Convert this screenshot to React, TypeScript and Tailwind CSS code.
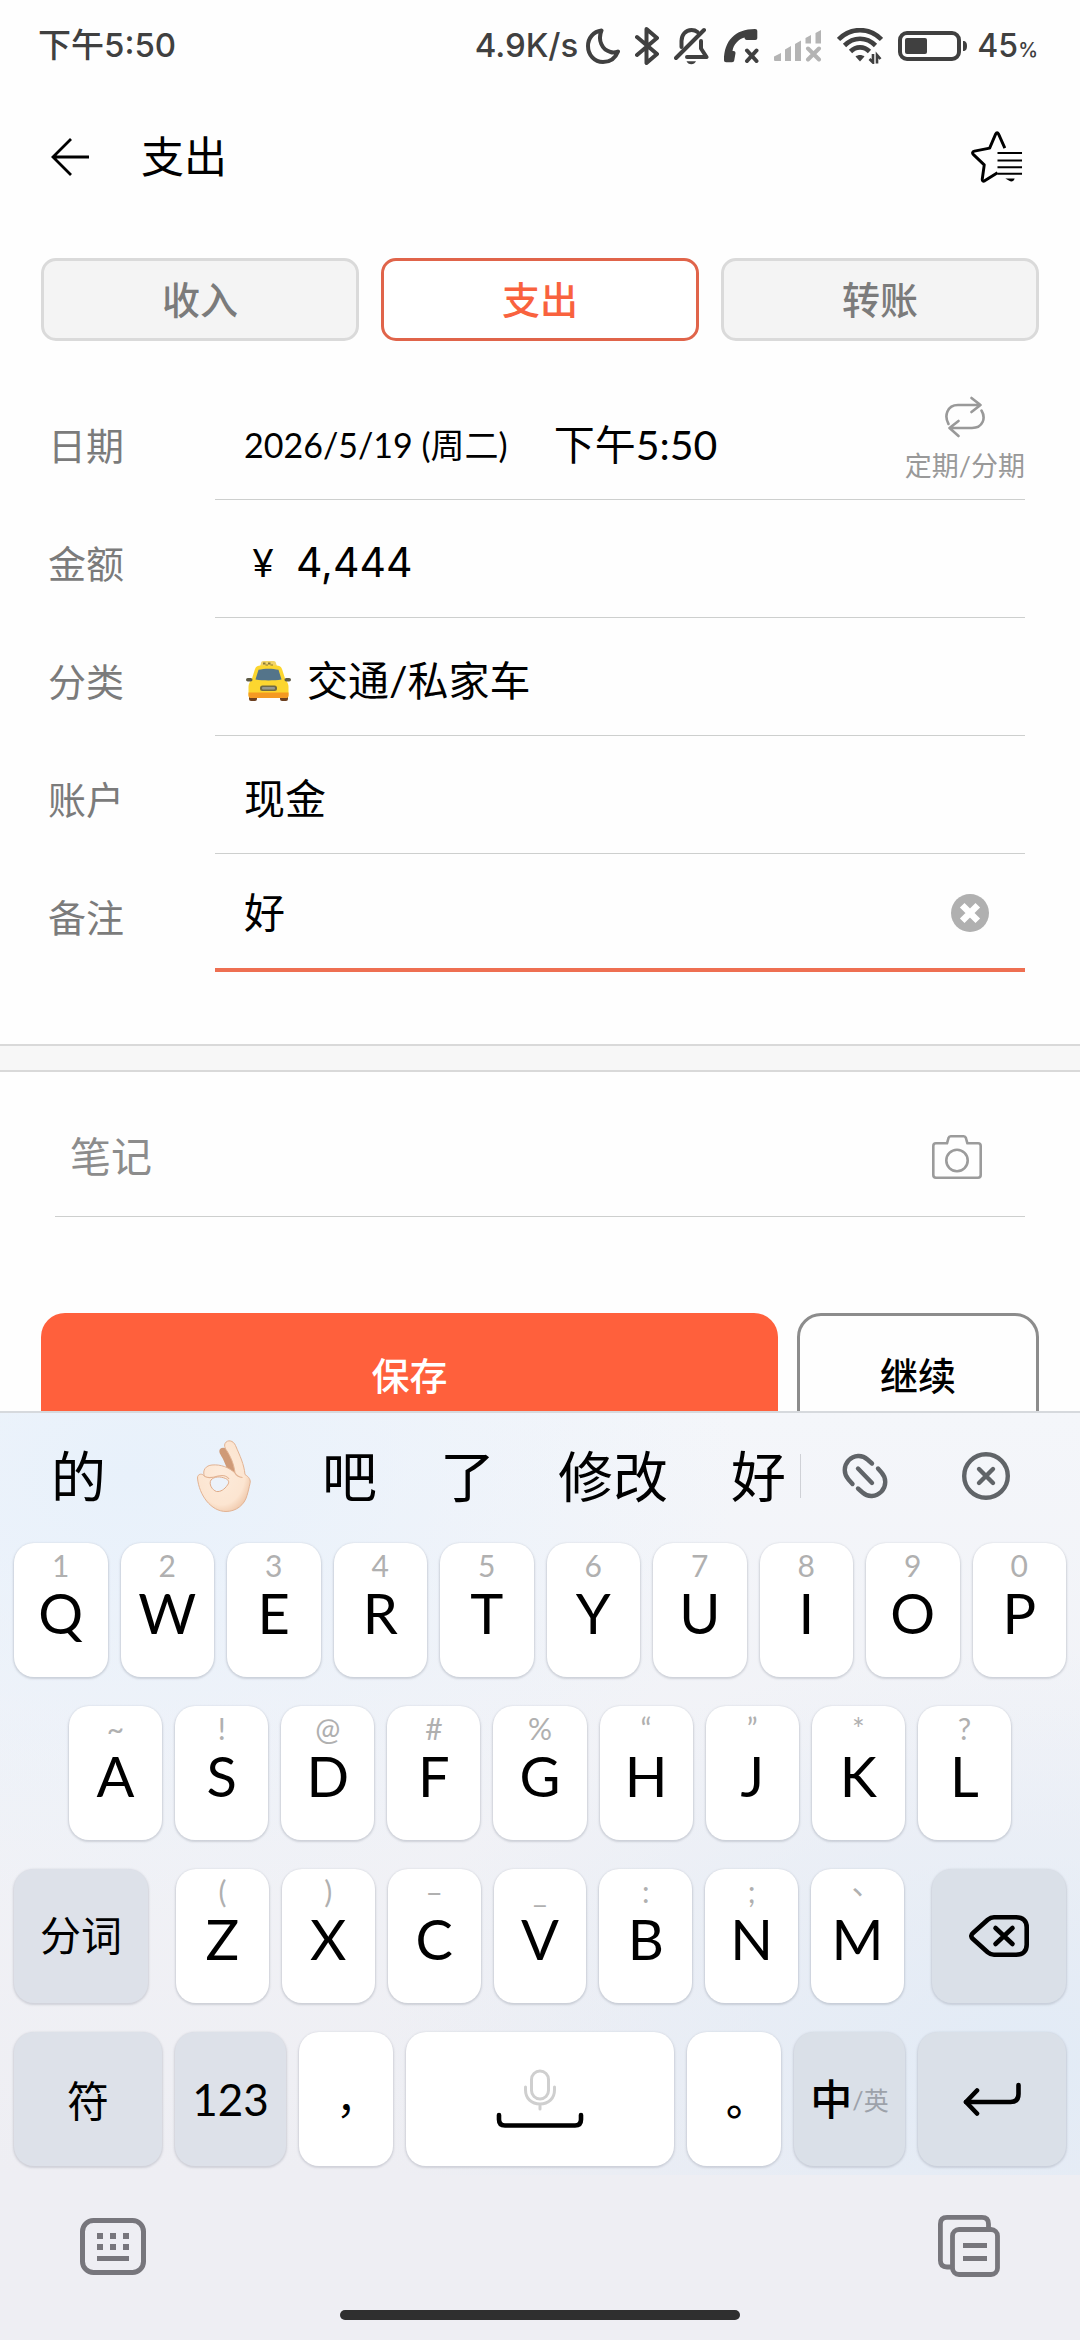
import { useState } from 'react';
import type { ReactNode } from 'react';

type TabId = 'income' | 'expense' | 'transfer';

interface KeyDef {
  main: string;
  hint: string;
}

const TABS: { id: TabId; label: string }[] = [
  { id: 'income', label: '收入' },
  { id: 'expense', label: '支出' },
  { id: 'transfer', label: '转账' },
];

const toKeys = (letters: string, hints: string): KeyDef[] =>
  letters.split('').map((main, i) => ({ main, hint: hints[i] }));

const ROW_ONE = toKeys('QWERTYUIOP', '1234567890');
const ROW_TWO = toKeys('ASDFGHJKL', '~!@#%“”*?');
const ROW_THREE = toKeys('ZXCVBNM', '()–_:;、');

/* ---------- Status bar icons ---------- */

function MoonIcon() {
  return (
    <svg width="34" height="36" viewBox="0 0 34 36" fill="none" stroke="currentColor" strokeWidth="4" strokeLinejoin="round">
      <path d="M15.500 2.500C7.500 3.500 2 10 2 18c0 9 6.500 16 15 16 7 0 12.500-4 15-10.500-2.500 1-5 1.300-7.500.5C16 22 11.500 12 15.500 2.500Z" />
    </svg>
  );
}

function BluetoothIcon() {
  return (
    <svg width="24" height="38" viewBox="0 0 24 38" fill="none" stroke="currentColor" strokeWidth="4" strokeLinejoin="round" strokeLinecap="round">
      <path d="M2 10 22 27 11.500 36V2L22 11 2 28" />
    </svg>
  );
}

function BellOffIcon() {
  return (
    <svg width="35" height="38" viewBox="0 0 35 38" fill="none" stroke="currentColor" strokeWidth="4" strokeLinecap="round" strokeLinejoin="round">
      <path d="M7.500 20v-6c0-6 4-11 10-11 2.500 0 4.500.8 6 2" />
      <path d="M27 14v7.500l5.500 8.500H13" />
      <path d="M2 31 30 3" />
      <path d="M12.500 34.200h9.500c-1 2-2.500 3-4.700 3s-3.900-1-4.800-3Z" fill="currentColor" stroke="none" />
    </svg>
  );
}

function PhoneMissedIcon() {
  return (
    <svg width="35" height="34" viewBox="0 0 35 34" fill="none">
      <path
        d="M0 31C0 12 11 0 31 0c1.500 0 2.300.8 2.300 2.300V9c0 1.200-.8 2-2 2h-8.500c-1.300 0-2.300-1-2.300-2.500-6 1.500-11 7-12 13.500H9.500c1.300 0 2 .8 2 2.200L10.300 31c-.2 1.500-1 2.200-2.300 2.200H2.200C.8 33.200 0 32.500 0 31Z"
        fill="currentColor"
      />
      <path d="m23 21.500 9.500 10.500m0-10.500L23 32" stroke="currentColor" strokeWidth="4" strokeLinecap="round" />
    </svg>
  );
}

function SignalIcon() {
  return (
    <svg width="48" height="32" viewBox="0 0 48 32" className="text-[#b4b4b4]" fill="currentColor">
      <path d="M0 26.500 7 23v8H1.500C.500 31 0 30.500 0 29.500ZM11 19.500l6-3.500v15h-6ZM21 14l6-3.500V31h-6ZM31.500 8 37 5v8.500h-5.500ZM41.500 3 47 0v13.500h-5.500Z" />
      <path d="m34 18.500 11 11m0-11-11 11" stroke="currentColor" strokeWidth="4" strokeLinecap="round" />
    </svg>
  );
}

function WifiIcon() {
  return (
    <svg width="46" height="36" viewBox="0 0 46 36" fill="none" stroke="currentColor" strokeWidth="4.600">
      <path d="M1.500 11.500c12-12.500 31-12.500 43 0" />
      <path d="M7.500 17.500c9-9 22-9 31 0" />
      <path d="M13.500 23.500c5.500-5.500 13.500-5.500 19 0" />
      <path d="m18.500 28.500c2.500-2 6.500-2 9 0L23 33.500Z" fill="currentColor" stroke="none" />
      <path d="m32.500 31 3.500 3.500V26M43.500 31 40 27v8.500" strokeWidth="2.600" />
    </svg>
  );
}

function BatteryIcon() {
  return (
    <svg width="69" height="30" viewBox="0 0 69 30" fill="none">
      <rect x="2" y="2" width="59" height="26" rx="7" stroke="currentColor" strokeWidth="4" />
      <rect x="7" y="7" width="22" height="16" rx="2" fill="currentColor" />
      <path d="M65 10c3 0 4 2 4 5s-1 5-4 5Z" fill="currentColor" />
    </svg>
  );
}

/* ---------- App icons ---------- */

function BackIcon() {
  return (
    <svg width="38" height="38" viewBox="0 0 38 38" fill="none" stroke="currentColor" strokeWidth="2.800">
      <path d="M20 1 2 19l18 18M2 19h36" />
    </svg>
  );
}

function StarListIcon() {
  return (
    <svg width="52" height="52" viewBox="1 0 53 52" fill="none" stroke="currentColor">
      <path
        d="M35.500 17 29 2.500c-.8-1.500-2-1.500-2.800 0L20 17 4.500 20c-2 .4-2.400 2-1.200 3.300L14.500 34l-2 14.500c-.2 1.800.8 2.600 2.400 1.800L28 42"
        strokeWidth="3"
        strokeLinejoin="round"
      />
      <path d="M28 22h25M28 29.500h25M28 36.500h25M28 43h25" strokeWidth="2" />
      <path d="M36 48h9.500c-.8 3-3.500 3.700-5.500 2.200Z" fill="currentColor" stroke="none" />
    </svg>
  );
}

function RepeatIcon() {
  return (
    <svg width="42" height="42" viewBox="0 0 42 42" fill="none" stroke="currentColor" strokeWidth="2.600" strokeLinejoin="round" strokeLinecap="round">
      <path d="M4.500 28C0 20 3 9 14 9h22M27.500 2 36.500 9l-9 7" />
      <path d="M37.500 14.500C42 22 39 32 28 32H6M14.500 25 5.500 32l9 8" />
    </svg>
  );
}

function TaxiIcon() {
  return (
    <svg width="45" height="40" viewBox="0 0 45 40">
      <path d="M14 5.500 15 2.200C15.200.8 16 0 17.500 0h10c1.500 0 2.300.8 2.500 2.200l1 3.300Z" fill="#f2d468" />
      <path d="M17 1.500h2.500v2H17Zm5 0h2.500v2H22ZM19.500 3.500H22v2h-2.500Zm5 0H27v2h-2.500Z" fill="#8b7a35" />
      <rect x="3" y="33" width="8" height="7" rx="2" fill="#6d4020" />
      <rect x="34" y="33" width="8" height="7" rx="2" fill="#6d4020" />
      <path d="M9 8c1-2.500 3-3.200 5.500-3.400h16c2.500.2 4.500.9 5.500 3.400l3.500 11c2 2 3 4 3 7v8c0 2.200-1 3-3 3h-34c-2 0-3-.8-3-3v-8c0-3 1-5 3-7Z" fill="#fcd62f" />
      <path d="M2.500 31.500h40V34c0 2.200-1 3-3 3h-34c-2 0-3-.8-3-3Z" fill="#f59a23" />
      <path d="M12.500 8.800c6-1.500 14-1.500 20 0l3 9.700c-8 1.200-18 1.200-26 0Z" fill="#54748a" />
      <rect x="14" y="24.500" width="17" height="5.500" rx="2.500" fill="#6f6a45" />
      <rect x="16" y="26" width="13" height="2.500" rx="1" fill="#96998f" />
      <rect x="0" y="17" width="6.500" height="3.600" rx="1.800" fill="#5d5a45" />
      <rect x="38.500" y="17" width="6.500" height="3.600" rx="1.800" fill="#5d5a45" />
    </svg>
  );
}

function ClearIcon() {
  return (
    <svg width="38" height="38" viewBox="0 0 38 38">
      <circle cx="19" cy="19" r="19" fill="#b0b0b0" />
      <path d="m13.500 13.500 11 11m0-11-11 11" stroke="#fff" strokeWidth="6.500" strokeLinecap="square" />
    </svg>
  );
}

function CameraIcon() {
  return (
    <svg width="50" height="44" viewBox="0 0 50 44" fill="none" stroke="currentColor" strokeWidth="2.600" strokeLinejoin="round">
      <path d="M4 8.300h11L16.500 3c.4-1.200 1-1.700 2.200-1.700h13c1.200 0 1.800.5 2.200 1.700l1.500 5.300H46c1.800 0 2.700.9 2.700 2.700v29c0 1.800-.9 2.700-2.700 2.700H4c-1.800 0-2.700-.9-2.700-2.700V11C1.300 9.200 2.200 8.300 4 8.300Z" />
      <circle cx="25" cy="25.500" r="10.700" />
    </svg>
  );
}

/* ---------- Keyboard icons ---------- */

function OkHand() {
  return (
    <svg width="90" height="72" viewBox="-28 0 90 72">
      <defs>
        <radialGradient id="skin" cx="0.45" cy="0.45" r="0.65">
          <stop offset="0" stopColor="#fdebdb" />
          <stop offset="0.7" stopColor="#fce5d1" />
          <stop offset="1" stopColor="#ecc0a0" />
        </radialGradient>
      </defs>
      <path d="M23 9c3-2.500 6-1 8 2l9 21-8 1-6-14c-2-4-5-7-3-10Z" fill="#cf9a77" />
      <path
        d="M28 3.500c2.500-4.500 8.500-3 10.500 2 4.500 10.500 8.500 18.500 9.500 29 4 2.500 6 5.500 5 9-1 4-1.500 7-3 12C47.500 65 39 71.500 29 71.500 14 71.500 2 55 .5 38c-.2-4.500 5.500-5 7-1.500C5 30 9 25.500 15 25c9-.8 17 2.500 23 8-1-9-4.500-17-9-23.500-1.300-2-1.800-4-1-6Z"
        fill="url(#skin)"
        stroke="#e2b393"
        strokeWidth="1"
      />
      <path d="M14 40c3-3.500 9-4 14.500-1.500 3.500 1.500 4 4 2 6.500-3 4.500-7 7-11 6.500C15 50 11.500 44 14 40Z" fill="#ecf2fa" stroke="#dfab88" strokeWidth="1" />
      <path d="M8 36.500c3 2 8 1 13-.5 5-1.200 9 0 11 3M38 33c1.500 3 4 4 7.500 4.500" fill="none" stroke="#e2b393" strokeWidth="1.200" />
    </svg>
  );
}

function LinkIcon() {
  return (
    <svg width="46" height="46" viewBox="0 0 46 46" fill="none" stroke="currentColor" strokeWidth="4.400" strokeLinecap="round">
      <path d="M10.500 31 6.500 26.500C1.500 21 1.500 13 6.500 7.500 12 2 20 1.500 25.500 6.500L30 10.500" />
      <path d="M16 15.500 30 30" />
      <path d="M36 15.500l3.500 4c5 5.500 5 13.500 0 19-5.500 5.500-13.500 6-19 1L16 35.500" />
    </svg>
  );
}

function CloseCircleIcon() {
  return (
    <svg width="48" height="48" viewBox="0 0 48 48" fill="none" stroke="currentColor" strokeWidth="4.400" strokeLinecap="round">
      <circle cx="24" cy="24" r="21.800" />
      <path d="m17 17 14 14m0-14L17 31" />
    </svg>
  );
}

function BackspaceIcon() {
  return (
    <svg width="60" height="42" viewBox="0 0 60 42" fill="none" stroke="currentColor" strokeWidth="4.600" strokeLinecap="round" strokeLinejoin="round">
      <path d="M25 2.300h22c7 0 10.700 3.700 10.700 10v17.400c0 6.300-3.700 10-10.700 10H25c-2.500 0-4.500-1-6.300-2.500L4 24c-2.300-2-2.300-4 0-6L18.700 4.800C20.500 3.300 22.500 2.300 25 2.300Z" />
      <path d="m26.500 13 17 16m0-16-17 16" />
    </svg>
  );
}

function EnterIcon() {
  return (
    <svg width="58" height="34" viewBox="0 0 58 34" fill="none" stroke="currentColor" strokeWidth="4.600" strokeLinecap="round" strokeLinejoin="round">
      <path d="M55.500 3v9c0 5.500-2.500 8-8 8H3" />
      <path d="M14 8.500 3 20l11 11.500" />
    </svg>
  );
}

function SpaceIcon() {
  return (
    <svg width="88" height="60" viewBox="0 0 88 60" fill="none" strokeLinecap="round">
      <rect x="35.500" y="2" width="17" height="28" rx="8.500" stroke="#cfcfcf" strokeWidth="3" />
      <path d="M29.500 18v3c0 8.500 6 14 14.500 14s14.500-5.500 14.500-14v-3M44 35v5" stroke="#cfcfcf" strokeWidth="3" />
      <path d="M3 46v4.500c0 4 2 6 6 6h70c4 0 6-2 6-6V46" stroke="#000" strokeWidth="4.600" />
    </svg>
  );
}

function KeyboardIcon() {
  return (
    <svg width="66" height="57" viewBox="0 0 66 57" fill="none">
      <rect x="2.500" y="2.500" width="61" height="52" rx="11" stroke="currentColor" strokeWidth="5" />
      <path d="M17 15h6v6h-6Zm13 0h6v6h-6Zm13 0h6v6h-6ZM17 26h6v6h-6Zm13 0h6v6h-6Zm13 0h6v6h-6ZM17 38h32v5H17Z" fill="currentColor" />
    </svg>
  );
}

function ClipboardIcon() {
  return (
    <svg width="62" height="62" viewBox="0 0 62 62" fill="none" stroke="currentColor" strokeWidth="4.800">
      <path d="M13 52H9c-4.500 0-6.600-2-6.600-6.500V9c0-4.500 2-6.600 6.600-6.600h35c4.500 0 6.500 2 6.500 6.600v5" />
      <rect x="14.500" y="14.500" width="45" height="45" rx="6.500" />
      <path d="M25 30.500h24M25 43.500h24" />
    </svg>
  );
}

/* ---------- Building blocks ---------- */

function FieldRow({ id, label, focused = false, children }: { id: string; label: string; focused?: boolean; children: ReactNode }) {
  return (
    <div className="flex h-[118px] items-stretch pl-12 pr-[55px]">
      <label htmlFor={id} className="flex w-[167px] items-center pt-2 text-[38px] text-[#7b7b7b]">
        {label}
      </label>
      <div
        className={`flex min-w-0 flex-1 items-center pl-[29px] ${
          focused ? 'border-b-4 border-[#ee6f52] pt-1' : 'border-b border-[#cdcfce] pt-2'
        }`}
      >
        {children}
      </div>
    </div>
  );
}

function LetterKey({ main, hint }: KeyDef) {
  return (
    <button
      type="button"
      aria-label={main}
      className="flex h-[134px] min-w-0 flex-1 flex-col items-center rounded-[20px] bg-white pt-[7px] font-[Lato,'Noto_Sans_CJK_TC',sans-serif] shadow-[0_1px_2px_1px_rgba(120,125,140,0.28)]"
    >
      <span className="text-[30px] leading-[30px] text-[#b0b0b0]">{hint}</span>
      <span className="text-[56px] leading-[66px]">{main}</span>
    </button>
  );
}

function WideKey({ label, className, children }: { label: string; className: string; children: ReactNode }) {
  return (
    <button
      type="button"
      aria-label={label}
      className={`flex h-[134px] min-w-0 items-center justify-center rounded-[20px] shadow-[0_1px_2px_1px_rgba(120,125,140,0.25)] ${className}`}
    >
      {children}
    </button>
  );
}

function StatusBar() {
  return (
    <div className="flex h-[92px] shrink-0 items-center justify-between pl-[38px] pr-[42px] font-[Inter,'Noto_Sans_CJK_SC',sans-serif] text-[33px] font-medium text-[#404040]">
      <span>下午5:50</span>
      <div className="flex items-center gap-[15px]">
        <div className="flex items-center gap-2">
          <span>4.9K/s</span>
          <MoonIcon />
        </div>
        <BluetoothIcon />
        <BellOffIcon />
        <PhoneMissedIcon />
        <SignalIcon />
        <WifiIcon />
        <div className="flex items-center gap-[10px]">
          <BatteryIcon />
          <span className="text-[32px]">
            45<span className="text-[20px]">%</span>
          </span>
        </div>
      </div>
    </div>
  );
}

function Keyboard({ onPick }: { onPick: (word: string) => void }) {
  return (
    <section
      aria-label="键盘"
      className="shrink-0 border-t-2 border-[#d6d9dd] bg-[#eeeef3] text-black"
    >
      <div className="bg-[radial-gradient(ellipse_at_12%_8%,#e8f1fb_0%,transparent_45%),radial-gradient(ellipse_at_95%_85%,#e2ebf6_0%,transparent_45%),linear-gradient(#f4f6fa,#eeeef3)] pb-[9px]">
        {/* Candidate words */}
        <div className="flex h-[130px] items-center pb-1 pr-[70px]">
          <div className="flex min-w-0 flex-1 items-center gap-[63px] overflow-hidden pl-[51px] text-[55px] leading-[72px]">
            <button type="button" onClick={() => onPick('的')}>的</button>
            <button type="button" aria-label="好的手势"><OkHand /></button>
            <button type="button" onClick={() => onPick('吧')}>吧</button>
            <button type="button" onClick={() => onPick('了')}>了</button>
            <button type="button" onClick={() => onPick('修改')} className="shrink-0">修改</button>
            <button type="button" onClick={() => onPick('好')} className="shrink-0">好</button>
          </div>
          <div className="h-11 w-px bg-[#cfd1d6]" />
          <div className="flex items-center gap-[74px] pl-[41px] text-[#606468]">
            <button type="button" aria-label="链接"><LinkIcon /></button>
            <button type="button" aria-label="关闭"><CloseCircleIcon /></button>
          </div>
        </div>

        {/* Keys */}
        <div className="flex flex-col gap-[29px] px-[14px]">
          <div className="flex gap-[13px]">
            {ROW_ONE.map((k) => <LetterKey key={k.main} {...k} />)}
          </div>
          <div className="flex gap-[13px] px-[55px]">
            {ROW_TWO.map((k) => <LetterKey key={k.main} {...k} />)}
          </div>
          <div className="flex gap-7">
            <WideKey label="分词" className="w-[134px] bg-[#dde1e9] text-[41px]">分词</WideKey>
            <div className="flex min-w-0 flex-1 gap-[13px]">
              {ROW_THREE.map((k) => <LetterKey key={k.main} {...k} />)}
            </div>
            <WideKey label="删除" className="w-[134px] bg-[#dae0e8]"><BackspaceIcon /></WideKey>
          </div>
          <div className="flex gap-[13px]">
            <WideKey label="符号" className="w-[148px] bg-[#dde1e9] pt-1 text-[42px]">符</WideKey>
            <WideKey label="数字" className="w-[111px] bg-[#dde1e9] font-[Lato,sans-serif] text-[44px]">123</WideKey>
            <WideKey label="逗号" className="w-[94px] bg-white pt-4 font-['Noto_Sans_CJK_TC',sans-serif] text-[42px]">，</WideKey>
            <WideKey label="空格" className="flex-1 bg-white"><SpaceIcon /></WideKey>
            <WideKey label="句号" className="w-[94px] bg-white pt-5 font-['Noto_Sans_CJK_TC',sans-serif] text-[42px] font-medium">。</WideKey>
            <WideKey label="中英切换" className="w-[111px] bg-[#dae0e8] text-[42px] font-medium">
              中<span className="pt-1 text-[25px] font-normal text-[#9da2aa]">/英</span>
            </WideKey>
            <WideKey label="换行" className="w-[148px] bg-[#dae0e8]"><EnterIcon /></WideKey>
          </div>
        </div>
      </div>

      {/* Bottom tool strip with the home indicator */}
      <div className="flex items-center justify-between px-20 pt-10 text-[#77767c]">
        <button type="button" aria-label="切换键盘"><KeyboardIcon /></button>
        <button type="button" aria-label="剪贴板"><ClipboardIcon /></button>
      </div>
      <div className="flex justify-center pb-5 pt-[33px]">
        <div className="h-[10px] w-[37%] rounded-full bg-[#2f2f2f]" />
      </div>
    </section>
  );
}

export default function App() {
  const [tab, setTab] = useState<TabId>('expense');
  const [amount, setAmount] = useState('4,444');
  const [remark, setRemark] = useState('好');
  const [note, setNote] = useState('');

  return (
    <div className="flex h-screen flex-col overflow-hidden bg-[#fefefe] font-[Lato,'Noto_Sans_CJK_SC',sans-serif] text-black">
      <StatusBar />

      <main className="min-h-0 flex-1 overflow-hidden">
        <header className="flex h-[130px] items-center pl-[51px] pr-[57px]">
          <button type="button" aria-label="返回"><BackIcon /></button>
          <h1 className="ml-[52px] flex-1 text-[43px] leading-[60px]">支出</h1>
          <button type="button" aria-label="收藏列表"><StarListIcon /></button>
        </header>

        <nav className="mt-9 flex gap-[22px] px-[41px]">
          {TABS.map(({ id, label }) => (
            <button
              key={id}
              type="button"
              onClick={() => setTab(id)}
              className={`h-[83px] flex-1 rounded-[15px] border-[3px] text-[38px] font-medium ${
                tab === id ? 'border-[#e0644a] bg-white text-[#f9623e]' : 'border-[#dadada] bg-[#f4f4f4] text-[#7b7b7b]'
              }`}
            >
              {label}
            </button>
          ))}
        </nav>

        <form className="mt-[41px]" onSubmit={(e) => e.preventDefault()}>
          <FieldRow id="date" label="日期">
            <button id="date" type="button" className="text-[34px]">2026/5/19 (周二)</button>
            <button type="button" className="ml-[46px] text-[41px]">下午5:50</button>
            <button type="button" className="-mt-3 ml-auto flex flex-col items-center gap-3 text-[27px] leading-8 text-[#999]">
              <RepeatIcon />
              定期/分期
            </button>
          </FieldRow>
          <FieldRow id="amount" label="金额">
            <span className="w-[52px] pl-2 text-[38px]">¥</span>
            <input
              id="amount"
              value={amount}
              onChange={(e) => setAmount(e.target.value)}
              className="min-w-0 flex-1 bg-transparent font-[Inter,sans-serif] text-[41px] outline-none"
            />
          </FieldRow>
          <FieldRow id="category" label="分类">
            <button id="category" type="button" className="flex items-center gap-4 pl-[2px] text-[41px]">
              <TaxiIcon />
              交通/私家车
            </button>
          </FieldRow>
          <FieldRow id="account" label="账户">
            <button id="account" type="button" className="text-[41px]">现金</button>
          </FieldRow>
          <FieldRow id="remark" label="备注" focused>
            <input
              id="remark"
              value={remark}
              onChange={(e) => setRemark(e.target.value)}
              className="min-w-0 flex-1 bg-transparent text-[41px] outline-none"
            />
            <button type="button" aria-label="清除" onClick={() => setRemark('')} className="mr-9">
              <ClearIcon />
            </button>
          </FieldRow>

          <div className="mt-[72px] h-7 border-y-2 border-[#d9d9d9] bg-[#f7f7f7]" />

          <div className="mx-[55px] flex h-[145px] items-center border-b border-[#cdcfce] pl-[15px] pr-[43px] pt-[26px]">
            <input
              aria-label="笔记"
              placeholder="笔记"
              value={note}
              onChange={(e) => setNote(e.target.value)}
              className="min-w-0 flex-1 bg-transparent text-[41px] outline-none placeholder:text-[#8c8c8c]"
            />
            <button type="button" aria-label="拍照" className="text-[#9b9b9b]"><CameraIcon /></button>
          </div>

          <div className="mt-24 flex gap-[19px] px-[41px] text-[38px]">
            <button type="submit" className="h-32 flex-1 rounded-[24px] bg-[#ff603c] pb-1 font-medium text-white">保存</button>
            <button type="button" className="h-32 w-[242px] rounded-[24px] border-[3px] border-[#8c8c8c] pb-1 font-medium">继续</button>
          </div>
        </form>
      </main>

      <Keyboard onPick={(word) => setRemark(remark + word)} />
    </div>
  );
}
